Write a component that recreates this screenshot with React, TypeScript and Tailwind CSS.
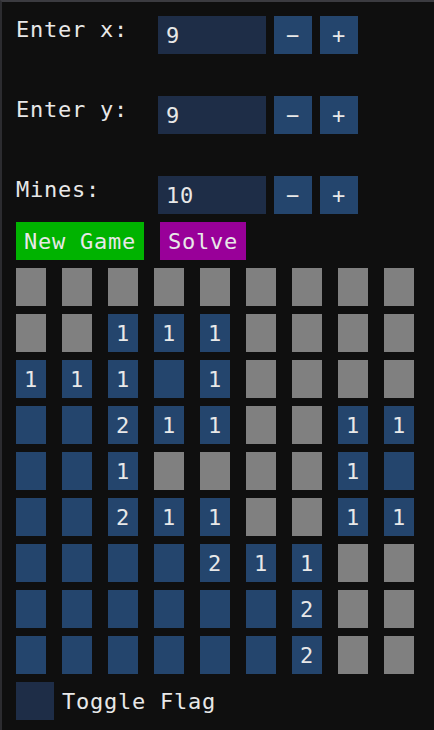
import React from "react";

type Cell = "G" | "B" | "1" | "2";

const ROWS: string[] = [
  "GGGGGGGGG",
  "GG111GGGG",
  "111B1GGGG",
  "BB211GG11",
  "BB1GGGG1B",
  "BB211GG11",
  "BBBB211GG",
  "BBBBBB2GG",
  "BBBBBB2GG",
];

function InputRow({ label, value, first }: { label: string; value: string; first?: boolean }) {
  return (
    <div className={`flex items-start ${first ? "" : "mt-[42px]"}`}>
      <div className="w-[142px] h-[38px] leading-[26px] pt-[1px]">{label}</div>
      <div className="w-[108px] h-[38px] bg-[#1e2d47] pl-[8px] pt-[7px] leading-[26px]">{value}</div>
      <div className="ml-[8px] w-[38px] h-[38px] bg-[#24456d] pt-[7px] leading-[26px] text-center">−</div>
      <div className="ml-[8px] w-[38px] h-[38px] bg-[#24456d] pt-[7px] leading-[26px] text-center">+</div>
    </div>
  );
}

export default function App() {
  return (
    <div className="w-[434px] min-h-[730px] bg-[#0f0f0f] border-t-2 border-l-2 border-t-[#3b3b40] border-l-[#2c2c30] pl-[14px] pt-[14px] font-['DejaVu_Sans_Mono',monospace] text-[22px] tracking-[0.76px] text-[#e8e8e8]">
      <InputRow label="Enter x:" value="9" first />
      <InputRow label="Enter y:" value="9" />
      <InputRow label="Mines:" value="10" />
      <div className="flex mt-[8px] gap-[16px]">
        <div className="w-[128px] h-[38px] bg-[#00b300] pl-[8px] pt-[7px] leading-[26px]">New Game</div>
        <div className="w-[86px] h-[38px] bg-[#990099] pl-[8px] pt-[7px] leading-[26px]">Solve</div>
      </div>
      <div className="grid grid-cols-[repeat(9,30px)] gap-x-[16px] gap-y-[8px] mt-[8px]">
        {ROWS.flatMap((row, r) =>
          row.split("").map((c, i) => {
            const cell = c as Cell;
            const gray = cell === "G";
            const num = cell === "1" || cell === "2" ? cell : "";
            return (
              <div
                key={`${r}-${i}`}
                className={`w-[30px] h-[38px] pt-[7px] leading-[26px] text-center ${gray ? "bg-[#808080]" : "bg-[#24456d]"}`}
              >
                {num}
              </div>
            );
          })
        )}
      </div>
      <div className="flex items-start mt-[8px]">
        <div className="w-[38px] h-[38px] bg-[#1e2d47]" />
        <div className="ml-[8px] h-[38px] pt-[7px] leading-[26px]">Toggle Flag</div>
      </div>
    </div>
  );
}
